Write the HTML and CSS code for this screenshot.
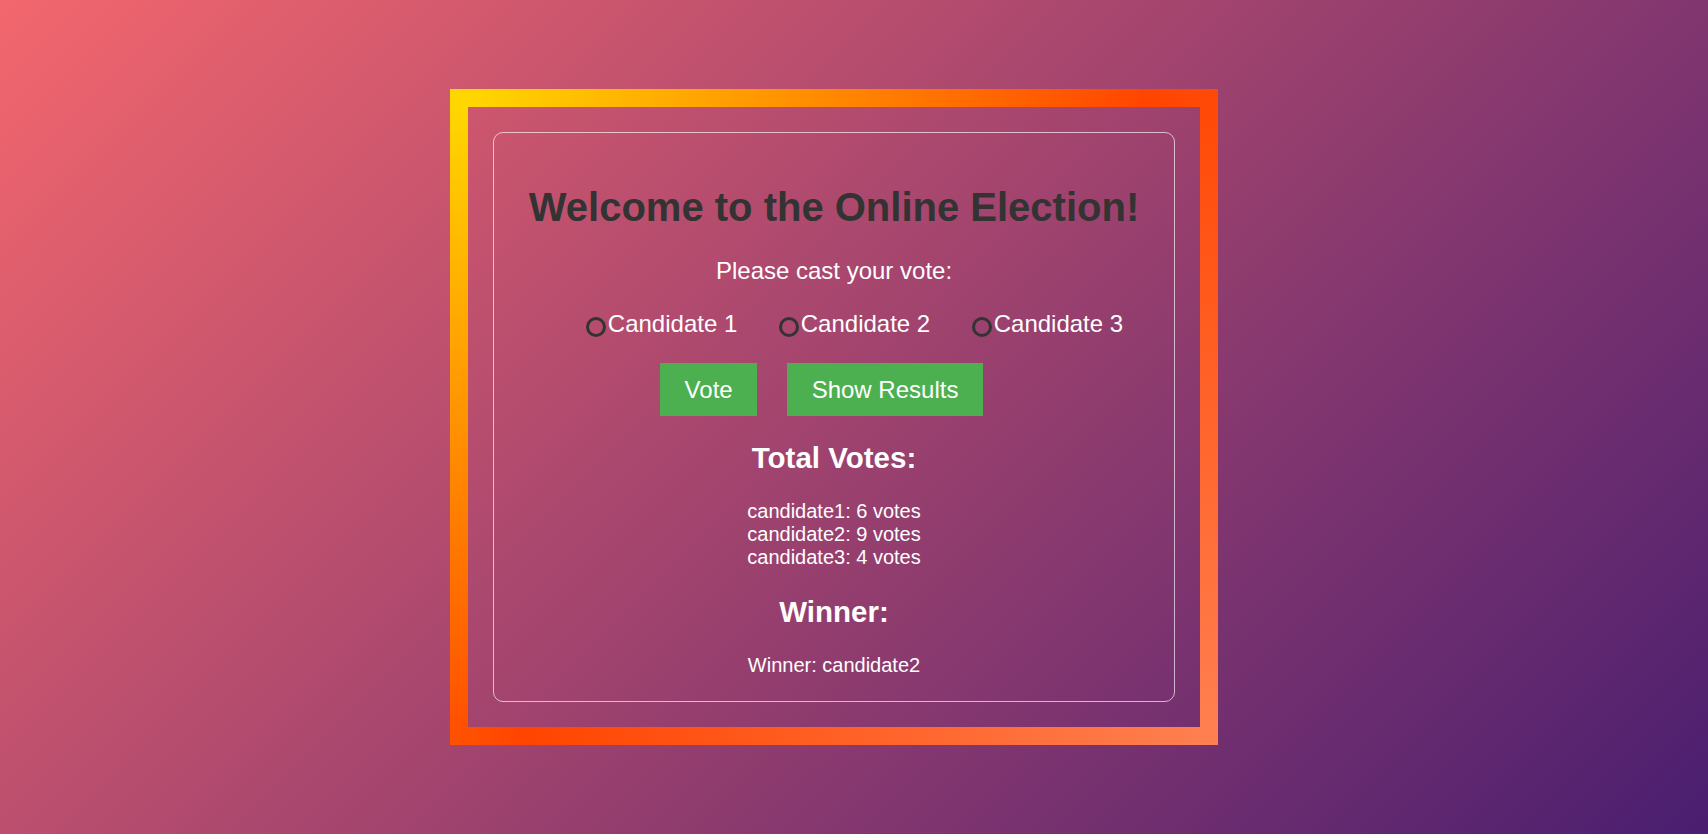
FILE: index.html
```html
<!DOCTYPE html>
<html lang="en">
<head>
<meta charset="utf-8">
<title>Online Election</title>
<link rel="stylesheet" href="styles.css">
</head>
<body>
  <main class="frame">
    <section class="card">
      <h1 class="title">Welcome to the Online Election!</h1>
      <p class="prompt">Please cast your vote:</p>
      <div class="options">
        <label class="option"><input class="radio" type="radio" name="candidate" value="candidate1"><span>Candidate 1</span></label>
        <label class="option"><input class="radio" type="radio" name="candidate" value="candidate2"><span>Candidate 2</span></label>
        <label class="option"><input class="radio" type="radio" name="candidate" value="candidate3"><span>Candidate 3</span></label>
      </div>
      <div class="actions">
        <button class="btn" type="button">Vote</button>
        <button class="btn" type="button">Show Results</button>
      </div>
      <h2 class="section-title">Total Votes:</h2>
      <div class="counts">
        <div>candidate1: 6 votes</div>
        <div>candidate2: 9 votes</div>
        <div>candidate3: 4 votes</div>
      </div>
      <h2 class="section-title winner-title">Winner:</h2>
      <p class="winner">Winner: candidate2</p>
    </section>
  </main>
</body>
</html>
```

FILE: styles.css
```css
* {
  box-sizing: border-box;
}

html, body {
  margin: 0;
  height: 100%;
}

body {
  min-height: 100vh;
  display: flex;
  justify-content: center;
  align-items: center;
  padding-right: 40px;
  font-family: "Liberation Sans", Arial, sans-serif;
  color: #ffffff;
  background: linear-gradient(135deg, #f3676d 0%, #4a1e70 100%);
  overflow: hidden;
}

.frame {
  padding: 25px;
  border: 18px solid transparent;
  border-image: linear-gradient(135deg, #ffd700, #ff4500, #ff7f50) 1;
}

.card {
  width: 682px;
  display: flex;
  flex-direction: column;
  text-align: center;
  padding: 24px 24px 23.7px;
  border: 1px solid rgba(255, 255, 255, 0.65);
  border-radius: 10px;
}

.title {
  margin: 26.8px 0 0;
  font-size: 40px;
  line-height: 46px;
  font-weight: 700;
  color: #333333;
}

.prompt {
  margin: 26.8px 0 0;
  font-size: 24px;
  line-height: 27.6px;
}

.options {
  margin-top: 25.6px;
  display: flex;
  justify-content: center;
  gap: 41.5px;
  padding-left: 41px;
  font-size: 24px;
  line-height: 28px;
}

.option {
  display: flex;
  align-items: flex-start;
  gap: 2px;
  cursor: pointer;
}

.radio {
  -webkit-appearance: none;
  appearance: none;
  flex: none;
  width: 20px;
  height: 20px;
  margin: 6.9px 0 0;
  border: 3px solid #333333;
  border-radius: 50%;
  background: transparent;
}

.actions {
  margin-top: 24.9px;
  display: flex;
  justify-content: center;
  gap: 30px;
  padding-right: 25px;
}

.btn {
  height: 53.3px;
  padding: 0 24.5px;
  border: 0;
  background: #4caf50;
  color: #ffffff;
  font-family: "Liberation Sans", Arial, sans-serif;
  font-size: 24px;
  line-height: 53.3px;
  cursor: pointer;
}

.section-title {
  margin: 25.2px 0 0;
  font-size: 29.5px;
  line-height: 33px;
  font-weight: 700;
}

.winner-title {
  margin-top: 26.5px;
}

.counts {
  margin-top: 25.7px;
  font-size: 20px;
  line-height: 23px;
}

.winner {
  margin: 25.8px 0 0;
  font-size: 20px;
  line-height: 23px;
}
```
